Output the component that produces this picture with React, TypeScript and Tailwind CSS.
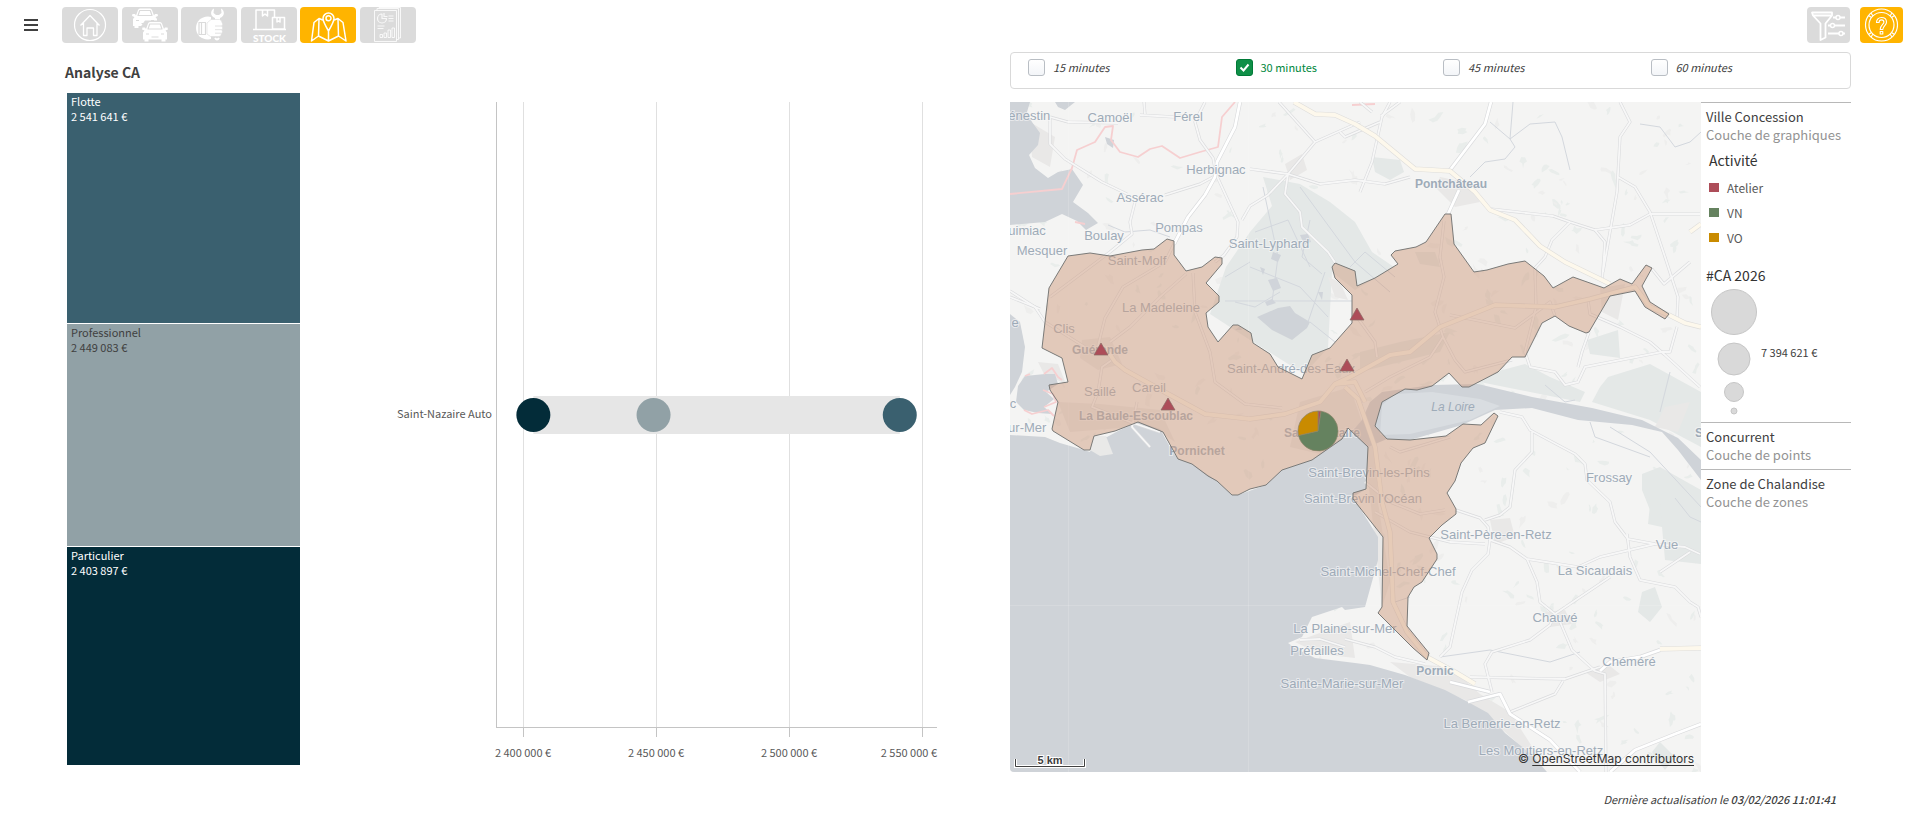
import { ReactNode, useState } from 'react';

const segments = [
  { label: 'Flotte', value: 2541641, color: '#3a606f', text: '#ffffff' },
  { label: 'Professionnel', value: 2449083, color: '#91a1a6', text: '#404040' },
  { label: 'Particulier', value: 2403897, color: '#032c39', text: '#ffffff' },
];

const formatEuro = (value: number) => `${String(value).replace(/\B(?=(\d{3})+$)/g, ' ')} €`;

const durations = [15, 30, 45, 60];

const activities = [
  { label: 'Atelier', color: '#ad4d59' },
  { label: 'VN', color: '#65825f' },
  { label: 'VO', color: '#c98b00' },
];

/* ---------- toolbar icons ---------- */

function HomeIcon() {
  return (
    <>
      <circle cx="28" cy="18" r="15.5" strokeWidth="1.2" />
      <path d="M18.500 18.500 28 8.500l9.500 10M21.500 16v12.500h3.500v-7.500h6.500v7.500h3.500V16" strokeWidth="1.3" />
    </>
  );
}

function Car() {
  return (
    <>
      <path
        fill="#fff"
        stroke="none"
        d="M4.500 7.500 6.500 2Q7 .5 8.500.5h10Q20 .5 20.500 2l2 5.500 1-1.500h2.500l.5 2-2.500 1 1.500 2v7h-1.500v2h-4v-2H7v2H3v-2H1.500v-7L3 9 .5 8 1 6h2.500z"
      />
      <path stroke="#dbdbdb" strokeWidth="1.200" d="M6.500 7.500 8.200 2.500h10.600l1.700 5zM10 15.500h7M4.500 12.500h3M19.500 12.500h3" />
    </>
  );
}

function CarsIcon() {
  return (
    <>
      <g transform="translate(9.500 1)">
        <Car />
      </g>
      <path fill="#dbdbdb" stroke="none" d="M23 13.500h24V36H18.500V20z" />
      <g transform="translate(19.500 14.500)">
        <Car />
      </g>
    </>
  );
}

function ServiceIcon() {
  return (
    <>
      <path
        fill="#fff"
        stroke="none"
        d="M33 1.500c-3.500 1.800-4 6.500-.5 8.800L34 11v4h5v-4l1.500-.7c3.500-2.300 3-7-.5-8.800l.5 4.500-2.500 2h-3L32.500 6z"
      />
      <path fill="#fff" stroke="none" d="M27 9.500c-7 0-12 5-12 11.500s5 11.500 12 11.500l3-.5V10z" />
      <path stroke="#dbdbdb" strokeWidth="1.200" d="M18 15.500h6.500v12H18zM20.500 15.500v12" />
      <path
        fill="#fff"
        stroke="#dbdbdb"
        strokeWidth=".6"
        d="M26 16 30 12.500h8.500q2.500.5 2.500 3 1.500 1.500 0 3.500 1.500 2 0 4 1.300 2-.5 3.800-.3 2.700-2.500 2.700h-8.500L26 27z"
      />
      <path stroke="#dbdbdb" strokeWidth=".8" d="M34 19h7M34 22.700h7M34 26.200h6.500" />
      <path strokeWidth="2" d="M34 31q2 3 4 0" />
    </>
  );
}

function StockIcon() {
  return (
    <>
      <path d="M12 22.500h33M15 22V3h18.500v7M21.500 3v6l2.500-2 2.500 2V3M31.500 10.500h12V22h-12zM36 11v4l1.500-1 1.500 1v-4" />
      <text
        x="28.500"
        y="34.500"
        textAnchor="middle"
        fill="#fff"
        stroke="none"
        className="font-['Lato',sans-serif] text-[10px] font-black"
      >
        STOCK
      </text>
    </>
  );
}

function MapIcon() {
  return (
    <path d="M24 13.500 19 11.500l-5 4L11.500 34l7-5 10 5 10-5 7.500 5L43 15.500l-5-4-5 2M19 12l-.5 17M28.500 24v10M38 12l.5 17M28.500 24c-3.500-6-5.500-9.500-5.500-12.500a5.500 5.500 0 0 1 11 0c0 3-2 6.500-5.500 12.500zM31 11.300a2.500 2.500 0 1 1-5 0 2.500 2.500 0 0 1 5 0z" />
  );
}

function ReportIcon() {
  return (
    <g strokeOpacity=".8">
      <path
        strokeWidth="1"
        d="M14.500 3.500h22v31h-22zM17 3.500v-2h21.500v31h-2M19 1.500v-1h21.500V31h-2M28.500 9h5M28.500 11.500h5M28.500 14h5M17.500 19h7M17.500 21.500h6M20 30.500v-3h2.500v3zM24 30.500V26h2.500v4.500zM28 30.500V23h2.500v7.500zM32 30.500V21h2.500v9.500z"
      />
      <path strokeWidth="1.200" d="M26.500 11.500a4.500 4.500 0 1 1-4.500-4.500v4.500zM24 6v3.500h3.500" />
    </g>
  );
}

function FilterIcon() {
  return (
    <>
      <path strokeWidth="1.800" d="M5 5.500h20v3l-6.500 8v14L13.500 33V16.500l-7.500-8zM6 8.500h18" />
      <path strokeWidth="1.800" d="M26 10.500h12M21 18.500h17M21 26.500h17" />
      <g fill="#dbdbdb">
        <circle cx="31" cy="10.500" r="2" />
        <circle cx="25.500" cy="18.500" r="2" />
        <circle cx="34" cy="26.500" r="2" />
      </g>
    </>
  );
}

function HelpIcon() {
  return (
    <>
      <circle cx="21.500" cy="18" r="16" strokeWidth="1.200" />
      <circle cx="21.500" cy="18" r="12.500" strokeWidth="1.200" />
      <path
        strokeWidth="1.200"
        d="m11 6 2 3M8.500 8.500l3 2M32 6l-2 3M34.500 8.500l-3 2M11 30l2-3M8.500 27.500l3-2M32 30l-2-3M34.500 27.500l-3-2"
      />
      <path
        strokeWidth="1.100"
        d="M16.500 15.500c0-3 2-5 5-5s5 2 5 4.700c0 3-3.700 3.800-3.700 7.300h-2.600c0-4.500 3.700-5.300 3.700-7.300 0-1.500-1-2.300-2.400-2.300s-2.400 1-2.400 2.600zM20.200 24.500h2.600v2.500h-2.600z"
      />
    </>
  );
}

interface ToolButtonProps {
  label: string;
  active?: boolean;
  narrow?: boolean;
  children: ReactNode;
}

function ToolButton({ label, active, narrow, children }: ToolButtonProps) {
  return (
    <button
      type="button"
      aria-label={label}
      className={`h-9 shrink-0 overflow-hidden rounded ${narrow ? 'w-[43px]' : 'w-14'} ${active ? 'bg-[#ffb400]' : 'bg-[#dbdbdb]'}`}
    >
      <svg
        viewBox={narrow ? '0 0 43 36' : '0 0 56 36'}
        fill="none"
        stroke="#fff"
        strokeWidth="1.500"
        strokeLinejoin="round"
        className="block size-full"
      >
        {children}
      </svg>
    </button>
  );
}

function Toolbar() {
  return (
    <header className="flex items-start pt-[7px] pr-1.5 pl-6">
      <button type="button" aria-label="Menu" className="mt-3 mr-6">
        <svg viewBox="0 0 14 12" className="block h-3 w-3.5" fill="#404040">
          <path d="M0 0h14v2H0zM0 5h14v2H0zM0 10h14v2H0z" />
        </svg>
      </button>
      <nav className="flex w-[354px] justify-between">
        <ToolButton label="Accueil"><HomeIcon /></ToolButton>
        <ToolButton label="Véhicules"><CarsIcon /></ToolButton>
        <ToolButton label="Atelier"><ServiceIcon /></ToolButton>
        <ToolButton label="Stock"><StockIcon /></ToolButton>
        <ToolButton label="Carte" active><MapIcon /></ToolButton>
        <ToolButton label="Rapports"><ReportIcon /></ToolButton>
      </nav>
      <div className="ml-auto flex gap-2.5">
        <ToolButton label="Filtres" narrow><FilterIcon /></ToolButton>
        <ToolButton label="Aide" narrow active><HelpIcon /></ToolButton>
      </div>
    </header>
  );
}

/* ---------- left side ---------- */

function Treemap() {
  return (
    <div className="flex min-h-[672px] flex-col gap-px">
      {segments.map((s) => (
        <div
          key={s.label}
          className="basis-0 px-1 py-px text-[11px] leading-[15px]"
          style={{ flexGrow: s.value, backgroundColor: s.color, color: s.text }}
        >
          <p>{s.label}</p>
          <p>{formatEuro(s.value)}</p>
        </div>
      ))}
    </div>
  );
}

const ticks = [2400000, 2450000, 2500000, 2550000];
const scaleX = (value: number) => 150 + ((value - 2400000) / 50000) * 133;

function DistributionChart() {
  return (
    <svg viewBox="0 0 564 672" className="block w-full overflow-visible" role="img" aria-label="CA par concession">
      {ticks.map((t) => (
        <g key={t} shapeRendering="crispEdges">
          <path d={`M${scaleX(t)} 9V634`} stroke="#e0e0e0" />
          <path d={`M${scaleX(t)} 634V644`} stroke="#c4c4c4" />
        </g>
      ))}
      <path d="M123.500 9V634.500H564" fill="none" stroke="#c4c4c4" shapeRendering="crispEdges" />
      <rect x={scaleX(2403897)} y="303" width={scaleX(2541641) - scaleX(2403897)} height="38" fill="#e6e6e6" />
      {segments.map((s) => (
        <circle key={s.label} cx={scaleX(s.value)} cy="322" r="17" fill={s.color} />
      ))}
      <g fill="#595959" className="text-[11px]">
        <text x="119" y="325" textAnchor="end">Saint-Nazaire Auto</text>
        {ticks.map((t, i) => (
          <text
            key={t}
            x={i === ticks.length - 1 ? 564 : scaleX(t)}
            y="664"
            textAnchor={i === ticks.length - 1 ? 'end' : 'middle'}
          >
            {formatEuro(t)}
          </text>
        ))}
      </g>
    </svg>
  );
}

/* ---------- map ---------- */

const SEA = '#cfd3d8';
const MARSH = '#e4e8e7';

const seaPaths = [
  'M0 0H20L17 10 22 20 30 31 28 43 19 53 25 66 38 76 48 70 62 67 73 83 63 100 78 111 88 121 76 128 67 119 52 112 35 120 0 123Z',
  'M45 0H65L55 8 48 5ZM95 35 104 38 103 46 97 42Z',
  'M0 212 10 220 15 245 12 270 5 285 0 293Z',
  'M8 284 15 274 35 272 45 272 48 282 36 290 44 297 34 305 42 312 28 311 14 308 6 300Z',
  'M0 333 35 335 50 341 74 348 80 350 84 334 90 334 97 335 110 328 128 320 150 327 160 345 168 357 182 362 207 379 222 393 228 393 256 383 272 368 302 358 330 337 345 326 352 318 360 300 372 290 422 283 468 282 522 295 582 306 632 318 668 336 691 358V378L668 348 652 330 622 323 568 318 522 306 485 308 452 323 400 338 377 337 358 345 356 387 343 395 368 435 368 458 355 505 335 508 332 505 302 515 292 535 278 541 285 546 305 556 345 561 360 563 395 573 435 588 458 600 478 611 495 631 522 653 537 670H0Z',
  'M247 215 268 206 280 204 285 211 300 220 297 226 282 238 262 228Z',
];

const marshPaths = [
  'M253 75 290 82 320 100 345 120 362 150 384 165 345 188 322 170 318 246 294 272 240 238 200 212 216 165 240 130 262 104Z',
  'M632 372 650 365 691 388V462L655 458 652 425 640 408 632 388Z',
  'M577 238 608 228 610 256 580 252ZM598 275 640 262 691 290V345L640 318 582 300 590 285Z',
  'M485 270 515 262 540 275 575 290 570 300 520 290 470 280Z',
  'M362 55 390 58 394 70 380 78 365 70ZM405 150H425L430 165 410 162Z',
  'M632 490 645 485 652 505 640 520 628 510ZM650 640 665 655 655 668 642 650ZM640 403 650 402 652 425 638 422Z',
  'M350 270 430 250 440 230 390 240 350 250Z',
];

// built-up areas
const townPaths = [
  'M275 62 292 52 297 68 280 78ZM72 238 100 235 112 262 88 268 70 256Z',
  'M48 300 90 302 150 308 165 340 150 330 110 326 60 330ZM290 300 340 285 352 320 310 352 280 345Z',
  'M430 75 455 80 470 100 445 105 425 85ZM345 330 365 340 368 400 380 480 372 505 360 395 356 360Z',
  'M480 418 500 416 505 435 485 442ZM535 510 555 508 562 522 540 525ZM575 570 600 564 610 572 590 580Z',
  'M285 540 340 520 345 556 310 552ZM380 560 440 565 470 592 500 610 535 665 495 630 455 598 400 575Z',
  'M28 260 48 262 56 282 34 272ZM318 175 330 180 338 198 325 195ZM590 186 615 182 608 218 592 210ZM655 305 680 300 668 330 645 325Z',
  'M20 20 45 35 40 65 22 55Z',
];

const roads = [
  'M40 15 58 20 108 21M40 15V42L55 57 92 80 117 92M130 13 165 15M134 0 135 12M195 0 185 20 190 38 203 56 206 72 228 120 227 135 214 153 205 160',
  'M269 0 305 40 350 20M305 40 278 72 240 67M278 72 275 92 290 110 292 125 318 150 326 162M278 72 258 93 240 104 232 118M278 72 310 82 345 78 375 82 400 75',
  'M155 93 190 82 205 74M125 100 120 120 122 132 100 150 40 195M0 189 25 205 35 220 75 245',
  'M88 244 95 216 113 185 155 160 165 140M176 172 150 195 120 225 100 240M183 171 185 210 200 250 205 280 235 302 272 306',
  'M102 258 92 265 88 290 82 305 120 320 150 330M127 300 122 325 140 345M350 90 362 60 372 15 380 0',
  'M481 107 543 114 560 120 585 128 620 123 640 112 690 112M560 120 542 138 535 155 525 166 526 205 515 250 520 265 545 270 555 283 568 280 575 265 590 262 652 250 660 250 667 225',
  'M585 128 595 140 592 180M608 75 625 85 640 110 654 152 668 195 667 215M610 0 620 20 610 35 607 90 593 170',
  'M578 198 580 212 610 225 640 240 655 253 690 285M579 230 572 250 568 265M545 214 540 200 520 215 505 226 440 213',
  'M434 119 430 155 434 175 425 210 433 235 445 258 455 270 502 258M433 235 420 255 380 275 355 290M347 215 365 240 367 255',
  'M490 310 512 315 520 328 548 343 565 352 575 362 577 378 600 400 605 420 618 437 645 442 675 445 690 452',
  'M522 330 522 350 505 368 500 405 490 413 475 418M446 408 470 416 478 425 480 438 500 445 517 457 568 465 590 455 645 442',
  'M480 438 478 452 462 468 452 490 440 545 430 555M517 457 527 480 530 500 545 512 600 475M545 512 540 523 520 538 482 550 475 562 482 590',
  'M548 515 562 548 585 569 595 572 596 670M617 432 620 455 630 478 665 485 680 500 688 505 691 515',
  'M335 537 365 545 385 555 415 562M460 575 555 577 590 565M553 579 545 592 525 600 500 610M380 345 390 350 440 335',
  'M355 380 380 400 410 412 435 408M365 410 400 430 440 440 475 442M335 545 310 537 290 538',
  'M370 20 335 35 330 30M371 14 390 0M350 0 362 10M650 470 680 450M680 160 654 182 642 167M0 195 30 207',
];

const trunkRoads = [
  'M230 0 225 25 207 60 205 75 195 93 178 115 164 142',
  'M481 0 475 22 440 68M449 88 438 112M458 600 490 592 500 612 540 638 570 670M440 580 480 590M600 670 625 648 665 632 691 622M590 569 600 560 630 555 650 548',
];

const highways = [
  'M284 0 305 12 325 13 345 22 365 34 405 67 440 69 465 90 480 108 505 118 530 144 555 160 590 177 600 182',
  'M691 122 680 130M659 213 675 221 691 225M650 547 691 546M417 555 445 570 465 582',
];

// main roads that cross the catchment area
const innerHighways = [
  'M95 245 105 260 115 268 160 293 195 312 240 317 275 312 310 300 325 282 340 275 380 253 400 250 430 225 485 203 545 205 580 197 625 185 640 205 659 213',
  'M335 285 348 297 365 345 372 400 380 430 383 500 397 530 417 555M325 282 345 280 355 300',
];

const placeLabels: { text: string; x: number; y: number; bold?: boolean; italic?: boolean }[] = [
  { text: 'Pénestin', x: 15, y: 18 },
  { text: 'Camoël', x: 100, y: 20 },
  { text: 'Férel', x: 178, y: 19 },
  { text: 'Herbignac', x: 206, y: 72 },
  { text: 'Assérac', x: 130, y: 100 },
  { text: 'Pompas', x: 169, y: 130 },
  { text: 'Boulay', x: 94, y: 138 },
  { text: 'Quimiac', x: 12, y: 133 },
  { text: 'Mesquer', x: 32, y: 153 },
  { text: 'Saint-Lyphard', x: 259, y: 146 },
  { text: 'Saint-Molf', x: 127, y: 163 },
  { text: 'La Madeleine', x: 151, y: 210 },
  { text: 'Clis', x: 54, y: 231 },
  { text: 'e', x: 5, y: 225 },
  { text: 'Guérande', x: 90, y: 252, bold: true },
  { text: 'Saint-André-des-Eaux', x: 281, y: 271 },
  { text: 'Saillé', x: 90, y: 294 },
  { text: 'Careil', x: 139, y: 290 },
  { text: 'c', x: 3, y: 306 },
  { text: 'La Baule-Escoublac', x: 126, y: 318, bold: true },
  { text: 'sur-Mer', x: 14, y: 330 },
  { text: 'Saint-Nazaire', x: 312, y: 335, bold: true },
  { text: 'Pornichet', x: 187, y: 353, bold: true },
  { text: 'Pontchâteau', x: 441, y: 86, bold: true },
  { text: 'La Loire', x: 443, y: 309, italic: true },
  { text: 'S', x: 689, y: 335, bold: true },
  { text: 'Frossay', x: 599, y: 380 },
  { text: 'Saint-Brevin-les-Pins', x: 359, y: 375 },
  { text: "Saint-Brevin l'Océan", x: 353, y: 401 },
  { text: 'Saint-Père-en-Retz', x: 486, y: 437 },
  { text: 'Vue', x: 657, y: 447 },
  { text: 'Saint-Michel-Chef-Chef', x: 378, y: 474 },
  { text: 'La Sicaudais', x: 585, y: 473 },
  { text: 'Chauvé', x: 545, y: 520 },
  { text: 'La Plaine-sur-Mer', x: 335, y: 531 },
  { text: 'Préfailles', x: 307, y: 553 },
  { text: 'Chéméré', x: 619, y: 564 },
  { text: 'Pornic', x: 425, y: 573, bold: true },
  { text: 'Sainte-Marie-sur-Mer', x: 332, y: 586 },
  { text: 'La Bernerie-en-Retz', x: 492, y: 626 },
  { text: 'Les Moutiers-en-Retz', x: 531, y: 653 },
];

const ZONE =
  'M58 154 80 151 100 154 132 148 144 147 157 137 164 139 164 153 176 169 192 165 205 155 212 156 212 162 196 181 209 194 209 200 196 211 198 225 208 240 223 223 228 223 241 231 243 241 260 252 268 265 292 277 302 253 320 246 342 221 342 193 325 176 322 165 325 161 345 169 347 184 365 176 388 162 381 153 385 149 406 145 416 140 435 112 441 112 444 142 464 170 477 168 498 162 515 159 534 174 543 186 563 175 594 186 610 177 622 182 636 163 642 166 632 184 640 200 659 212 655 217 635 205 625 189 600 194 579 230 576 231 559 224 545 214 532 221 515 255 502 255 488 270 459 285 452 285 439 271 422 284 407 288 395 287 372 300 365 324 377 337 400 338 436 334 453 322 471 323 484 311 488 314 475 341 463 346 451 361 445 379 437 391 446 407 446 412 432 423 419 436 427 452 427 457 412 480 404 485 398 495 397 524 419 551 417 558 403 546 368 511 372 505 373 435 343 397 343 391 356 387 358 345 338 326 332 337 302 358 272 368 256 383 240 387 228 393 222 393 207 379 198 374 182 362 168 357 153 330 128 320 105 329 84 334 80 348 74 348 43 329 42 327 48 300 40 288 39 283 58 280 52 256 32 246 39 186Z';

const competitors = [
  [347, 206],
  [91, 241],
  [337, 257],
  [158, 296],
];

// woods and hamlets scattered over the land, drawn from a fixed seed
function scatter(count: number) {
  let seed = 11;
  const next = () => {
    seed = (seed * 16807) % 2147483647;
    return seed / 2147483647;
  };
  return Array.from({ length: count }, () => {
    const x = next() * 691;
    const y = next() * 670;
    const size = 2 + next() * 4;
    const tilt = next() * 3;
    const points = Array.from({ length: 8 }, (_, i) => {
      const angle = (i / 8) * Math.PI * 2;
      const radius = size * (0.3 + next());
      const dx = Math.cos(angle) * radius * 1.4;
      const dy = Math.sin(angle) * radius * 0.6;
      return `${(x + dx * Math.cos(tilt) - dy * Math.sin(tilt)).toFixed(1)} ${(y + dx * Math.sin(tilt) + dy * Math.cos(tilt)).toFixed(1)}`;
    });
    return { d: `M${points.join(' ')}Z`, color: next() > 0.4 ? '#e9edeb' : '#eeeeed' };
  });
}

const patches = scatter(480);

function pieSlice(from: number, to: number) {
  const at = (deg: number) => {
    const rad = ((deg - 90) * Math.PI) / 180;
    return `${308 + 20 * Math.cos(rad)} ${329 + 20 * Math.sin(rad)}`;
  };
  return `M308 329L${at(from)}A20 20 0 ${to - from > 180 ? 1 : 0} 1 ${at(to)}Z`;
}

function Roads({ paths, color, casing, width }: { paths: string[]; color: string; casing: string; width: number }) {
  return (
    <g fill="none" strokeLinejoin="round">
      {paths.map((d) => (
        <path key={d} d={d} stroke={casing} strokeWidth={width} />
      ))}
      {paths.map((d) => (
        <path key={d} d={d} stroke={color} strokeWidth={width - 1.2} />
      ))}
    </g>
  );
}

function CatchmentMap() {
  return (
    <div className="relative overflow-hidden rounded-bl">
      <svg viewBox="0 0 691 670" className="block w-full" role="img" aria-label="Zone de chalandise">
        <rect width="691" height="670" fill="#f4f4f3" />
        {patches.map((p) => (
          <path key={p.d} d={p.d} fill={p.color} />
        ))}
        {marshPaths.map((d) => (
          <path key={d} d={d} fill={MARSH} />
        ))}
        {townPaths.map((d) => (
          <path key={d} d={d} fill="#e9e8e7" />
        ))}
        {seaPaths.map((d) => (
          <path key={d} d={d} fill={SEA} />
        ))}
        <path d="M84 334 96 334 103 352 90 354 80 348Z" fill="#e9e9e8" />
        <path d="M372 303 385 292 422 290 470 297 490 304 460 318 400 332 370 333Z" fill="#d9dde1" />

        {/* canals and streams */}
        <g fill="none" stroke="#d3d7dd" strokeWidth="1">
          <path d="M253 85 268 155 262 200M290 85 345 160 380 190M215 199H342M245 130 278 118 300 165M240 165 290 185 318 215M300 118 292 155 312 172M270 190 245 205 225 200M300 220 325 240M215 175 240 160M315 170 298 220" />
          <path d="M98 123 115 130 140 128 160 135M460 75 475 60 495 57 505 45 500 37 480 20M500 37 520 22 545 20 552 35 560 68M500 37 503 0M630 22 650 25 665 45 680 40 691 30M340 165 355 150 385 175M600 325 640 350 691 405M580 320 585 335 640 355" />
          <path d="M430 555 480 548 540 560 570 550M385 500 400 495M665 396 680 415 691 420M660 270 650 310M535 283 555 300 565 298" />
        </g>
        <path
          d="M263 150l8 3-3 7-7-3zM290 133l8-1 3 8-7 2zM258 178l9-2 4 10-8 3zM250 165l5 2-2 6zM308 190l5 0-1 8zM255 200l7-3 4 4-9 3zM225 228l5-4 2 4z"
          fill="#d0d4da"
        />
        <g fill="none" stroke="#f6cfd0" strokeWidth="1.800" strokeLinejoin="round">
          <path d="M0 92 52 87 62 66 67 48 85 40 95 25 103 24 101 38 110 50 128 55 140 47 152 44 170 56 190 50 208 45 212 15 225 0" />
          <path d="M15 274 20 272M34 272 42 266 48 275 52 278M33 288 43 292 46 300 34 305M14 308 22 312 38 308 44 314M65 120 75 122M342 3 365 2" />
        </g>

        <Roads paths={roads} color="#f7f7f7" casing="#dadbdd" width={3} />
        <Roads paths={trunkRoads} color="#ffffff" casing="#d9dadc" width={4} />
        <Roads paths={[...highways, ...innerHighways]} color="#fdf8ec" casing="#dedddb" width={5} />

        <path d="M58.500 0V670M238.500 0V670M0 503.500H691" stroke="#ffffff" strokeOpacity=".15" />

        <g
          fill="#9eabb8"
          stroke="#f8f8f8"
          strokeOpacity=".6"
          strokeWidth="2"
          paintOrder="stroke"
          textAnchor="middle"
          className="font-['Liberation_Sans',Arial,sans-serif] text-[13px]"
        >
          {placeLabels.map((p) => (
            <text
              key={p.text}
              x={p.x}
              y={p.y}
              strokeWidth={p.italic ? 0 : undefined}
              className={p.bold ? 'text-[12px] font-bold' : p.italic ? 'text-[12px] italic' : undefined}
            >
              {p.text}
            </text>
          ))}
        </g>

        <path d={ZONE} fill="#d09e81" fillOpacity=".5" stroke="#7a7a78" strokeWidth="1" strokeLinejoin="round" />

        {competitors.map(([x, y]) => (
          <path key={x} d={`M${x} ${y}l7 12h-14z`} fill="#ad4d59" stroke="#8a6a66" strokeWidth=".7" />
        ))}
        <g stroke="#8b8568" strokeWidth=".7">
          <path d={pieSlice(0, 9)} fill="#ad4d59" />
          <path d={pieSlice(9, 257)} fill="#65825f" />
          <path d={pieSlice(257, 360)} fill="#c98b00" />
        </g>

        <path d="M5.500 657V664.500H74.500V657" fill="none" stroke="#ffffff" strokeWidth="3" />
        <path d="M5.500 657V664.500H74.500V657" fill="none" stroke="#404040" />
        <text
          x="40"
          y="662"
          textAnchor="middle"
          fill="#404040"
          stroke="#ffffff"
          strokeWidth="2"
          paintOrder="stroke"
          className="font-['Liberation_Sans',Arial,sans-serif] text-[11px] font-bold"
        >
          5 km
        </text>
      </svg>
      <p className="absolute right-[7px] bottom-1 font-['Inter',sans-serif] text-[12px] leading-[18px] text-[#333333]">
        © <a href="#openstreetmap" className="underline underline-offset-2">OpenStreetMap contributors</a>
      </p>
    </div>
  );
}

function LayerTitle({ title, subtitle }: { title: string; subtitle: string }) {
  return (
    <div className="pt-[5px] text-[13px] leading-[18px]">
      <h3 className="text-[#404040]">{title}</h3>
      <p className="text-[#939393]">{subtitle}</p>
    </div>
  );
}

function Legend() {
  return (
    <aside className="whitespace-nowrap">
      <section className="border-t border-[#b8b8b8] pl-[5px]">
        <LayerTitle title="Ville Concession" subtitle="Couche de graphiques" />
        <h4 className="mt-[7px] pl-[3px] text-[14px] leading-[18px] text-[#333333]">Activité</h4>
        <ul className="mt-1.5 pl-[3px]">
          {activities.map((a) => (
            <li key={a.label} className="flex h-[25px] items-center gap-2 text-[12px] text-[#595959]">
              <span className="h-[9px] w-2.5" style={{ backgroundColor: a.color }} />
              {a.label}
            </li>
          ))}
        </ul>
        <h4 className="mt-4 text-[14px] leading-[18px] text-[#333333]">#CA 2026</h4>
        <svg viewBox="0 0 145 136" className="mt-0.5 block h-[136px] w-[145px]">
          <g fill="#d9d9d9" stroke="#c6c6c6">
            <circle cx="28" cy="26" r="22.500" />
            <circle cx="28" cy="73" r="16" />
            <circle cx="28" cy="106" r="9.500" />
            <circle cx="28" cy="125" r="3" />
          </g>
          <text x="55" y="71" fill="#404040" className="text-[11px]">7 394 621 €</text>
        </svg>
      </section>
      <section className="h-[47px] border-t border-[#b8b8b8] pl-[5px]">
        <LayerTitle title="Concurrent" subtitle="Couche de points" />
      </section>
      <section className="border-t border-[#b8b8b8] pl-[5px]">
        <LayerTitle title="Zone de Chalandise" subtitle="Couche de zones" />
      </section>
    </aside>
  );
}

function DurationFilter() {
  const [selected, setSelected] = useState<number[]>([30]);

  const toggle = (minutes: number) =>
    setSelected((prev) => (prev.includes(minutes) ? prev.filter((m) => m !== minutes) : [...prev, minutes]));

  return (
    <div className="grid h-[37px] grid-cols-4 gap-x-2 rounded border border-[#d9d9d9] pt-[5px] pl-[17px]">
      {durations.map((minutes) => {
        const checked = selected.includes(minutes);
        return (
          <label
            key={minutes}
            className={`flex h-[18px] items-center gap-2 text-[11px] ${checked ? 'text-[#00873d]' : 'text-[#404040] italic'}`}
          >
            <span className="relative flex size-[17px]">
              <input
                type="checkbox"
                checked={checked}
                onChange={() => toggle(minutes)}
                className="size-[17px] appearance-none rounded-[3px] border border-[#b9bec4] bg-gradient-to-b from-white to-[#f3f5f8] checked:border-[#007a37] checked:bg-[#0f8f47] checked:bg-none"
              />
              {checked && (
                <svg
                  viewBox="0 0 17 17"
                  fill="none"
                  stroke="#fff"
                  strokeWidth="2"
                  className="pointer-events-none absolute inset-0"
                >
                  <path d="m4.500 8.500 3 3 5-6" />
                </svg>
              )}
            </span>
            {minutes} minutes
          </label>
        );
      })}
    </div>
  );
}

export default function App() {
  return (
    <div className="bg-white font-['Noto_Sans_CJK_SC',sans-serif] text-[#404040]">
      <Toolbar />
      <main className="mt-[9px] grid grid-cols-[870fr_841fr] gap-[73px] pr-[58px] pl-[67px]">
        <section>
          <h2 className="-ml-0.5 h-[41px] pt-[9px] text-[14px] leading-[22px] font-bold">Analyse CA</h2>
          <div className="grid grid-cols-[233fr_564fr] gap-[73px]">
            <Treemap />
            <DistributionChart />
          </div>
        </section>
        <section>
          <DurationFilter />
          <div className="mt-[13px] grid grid-cols-[691fr_150fr]">
            <CatchmentMap />
            <Legend />
          </div>
          <p className="mt-4 pr-[15px] text-right text-[11px] leading-[22px] italic">
            Dernière actualisation le <span className="font-medium">03/02/2026 11:01:41</span>
          </p>
        </section>
      </main>
    </div>
  );
}
